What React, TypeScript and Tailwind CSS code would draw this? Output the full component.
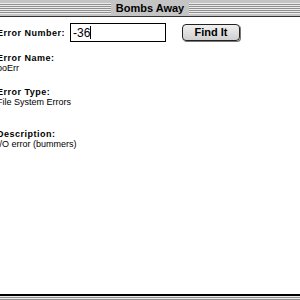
import React from "react";

const stripes =
  "repeating-linear-gradient(to bottom, #ececec 0px, #ececec 1px, #8f8f8f 1px, #8f8f8f 2px)";

export default function App() {
  const label = "text-[9px] font-bold tracking-[0.5px] text-black leading-[10px]";
  const value = "text-[9px] text-black leading-[10px]";
  return (
    <div
      className="w-[300px] h-[300px] bg-white flex flex-col overflow-hidden"
      style={{ fontFamily: '"Liberation Sans", Arial, sans-serif' }}
    >
      <div className="h-[17px] bg-[#c4c4c4] flex items-center border-b border-[#333]">
        <div className="flex-1 h-[11px]" style={{ backgroundImage: stripes }} />
        <div className="px-[5px] text-[11px] font-bold text-black leading-none">Bombs Away</div>
        <div className="flex-1 h-[11px]" style={{ backgroundImage: stripes }} />
      </div>
      <div className="flex-1 flex flex-col -ml-[3px]">
        <div className="flex items-center h-[25px] mt-[3px]">
          <div className={label + " w-[73px]"}>Error Number:</div>
          <div className="w-[96px] h-[19px] border border-black bg-white flex items-center pl-[2px] text-[12px] text-black">
            -36<span className="w-[1px] h-[13px] bg-black" />
          </div>
          <div className="ml-[16px] w-[58px] h-[17px] rounded-[4px] border border-[#222] bg-gradient-to-b from-[#f0f0f0] to-[#cfcfcf] flex items-center justify-center text-[11px] font-bold text-black shadow-[1px_1px_0_#777]">
            Find It
          </div>
        </div>
        <div className="flex flex-col mt-[8px]">
          <div className={label}>Error Name:</div>
          <div className={value}>boErr</div>
          <div className={label + " mt-[14px]"}>Error Type:</div>
          <div className={value}>File System Errors</div>
          <div className={label + " mt-[22px]"}>Description:</div>
          <div className={value}>I/O error (bummers)</div>
        </div>
      </div>
      <div className="h-[6px] border-t-2 border-black" style={{ backgroundImage: stripes }} />
    </div>
  );
}
